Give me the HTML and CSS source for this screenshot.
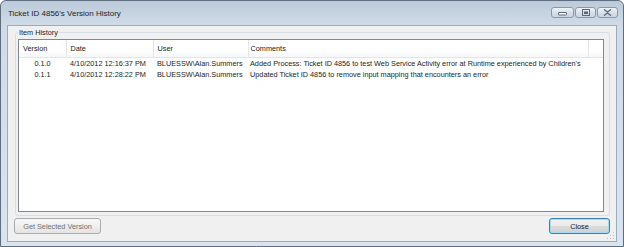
FILE: index.html
```
<!DOCTYPE html>
<html lang="en">
<head>
  <meta charset="UTF-8" />
  <title>Ticket ID 4856's Version History</title>
  <link rel="stylesheet" href="styles.css">
</head>
<body>
<div class="window">
  <div class="titlebar">
    <span class="title">Ticket ID 4856's Version History</span>
    <div class="caption-buttons">
      <span class="cap cap-min">
        <svg width="9" height="5" viewBox="0 0 9 5"><rect x="0.5" y="1.5" width="8" height="2.5" rx="0.5" fill="#fff" stroke="#5b6878"/></svg>
      </span>
      <span class="cap cap-max">
        <svg width="8" height="7" viewBox="0 0 8 7"><rect x="0.5" y="0.5" width="7" height="6" fill="none" stroke="#5b6878"/><rect x="2" y="2.5" width="4" height="2.5" fill="#5b6878"/></svg>
      </span>
      <span class="cap cap-close">
        <svg width="9" height="7" viewBox="0 0 9 7"><path d="M1 0.5 L4.5 3 L8 0.5 M1 6.5 L4.5 4 L8 6.5" fill="none" stroke="#5b6878" stroke-width="1.4"/></svg>
      </span>
    </div>
  </div>

  <div class="client">
    <fieldset class="group">
      <legend>Item History</legend>
      <div class="listview">
        <table class="grid">
          <colgroup>
            <col class="c-version"><col class="c-date"><col class="c-user"><col class="c-comments"><col>
          </colgroup>
          <thead>
            <tr>
              <th>Version</th>
              <th>Date</th>
              <th>User</th>
              <th>Comments</th>
              <th class="filler"></th>
            </tr>
          </thead>
          <tbody>
            <tr>
              <td class="ver">0.1.0</td>
              <td>4/10/2012 12:16:37 PM</td>
              <td>BLUESSW\Alan.Summers</td>
              <td>Added Process: Ticket ID 4856 to test Web Service Activity error at Runtime experienced by Children's</td>
              <td></td>
            </tr>
            <tr>
              <td class="ver">0.1.1</td>
              <td>4/10/2012 12:28:22 PM</td>
              <td>BLUESSW\Alan.Summers</td>
              <td>Updated Ticket ID 4856 to remove input mapping that encounters an error</td>
              <td></td>
            </tr>
          </tbody>
        </table>
      </div>
    </fieldset>

    <div class="button-row">
      <button class="btn" type="button" disabled>Get Selected Version</button>
      <button class="btn btn-default" type="button">Close</button>
    </div>

    <span class="grip"></span>
  </div>
</div>
</body>
</html>
```

FILE: styles.css
```
*{box-sizing:border-box;margin:0;padding:0}
html,body{height:100%}
body{background:#fff;font-family:"Liberation Sans",Arial,sans-serif;font-size:7.3px;color:#1e1e1e;overflow:hidden}

.window {
  width: 624px;
  height: 247px;
  border: 1px solid #5f6e7e;
  border-radius: 6px 6px 0 0;
  background: linear-gradient(#bccad9, #cfdbe7 24px, #d9e4f0);
  padding: 0 6px 4px 6px;
  display: flex;
  flex-direction: column;
}

.titlebar {
  height: 24px;
  display: flex;
  align-items: flex-start;
  justify-content: space-between;
}
.title{font-size:8px;color:#1f1f1f;padding:8px 0 0 1px;line-height:9px}

.caption-buttons{display:flex;gap:1px;padding-top:6px;margin-right:-1px}
.cap {
  width: 21px;
  height: 11px;
  border: 1px solid #8a99aa;
  border-radius: 3px;
  background: linear-gradient(#eef3f8, #d5dfea 55%, #c9d5e2);
  display: flex;
  align-items: center;
  justify-content: center;
}
.cap-min{width:23px}
.cap-min svg{margin-top:2px}

.client {
  flex: 1;
  position: relative;
  background: #f0f0f0;
  border: 1px solid #9dacbc;
  display: flex;
  flex-direction: column;
}

.group {
  margin: 2px 6px 0 7px;
  padding: 2px 5px 3px 2px;
  border: 1px solid #d5dfe5;
  border-radius: 3px;
  flex: 1;
  display: flex;
  flex-direction: column;
  min-height: 0;
}
.group legend{padding:0 1px;line-height:9px;font-size:7.3px;color:#1e1e1e}

.listview {
  flex: 1;
  background: #fff;
  border: 1px solid #828790;
  overflow: hidden;
}

.grid{width:100%;border-collapse:collapse;table-layout:fixed}
.c-version{width:47px}.c-date{width:87px}.c-user{width:95px}.c-comments{width:340px}
.grid th {
  height: 17px;
  text-align: left;
  font-weight: normal;
  color: #222;
  padding: 1px 0 0 4px;
  background: linear-gradient(#fff, #fff 60%, #f6f7f9);
  border-right: 1px solid #e3e5e8;
  border-bottom: 1px solid #e3e5e8;
  white-space: nowrap;
}
.grid th.filler{border-right:none}
.grid td {
  height: 11px;
  line-height: 11px;
  padding: 0 0 0 4px;
  white-space: nowrap;
  overflow: hidden;
}
.grid td:nth-child(4),.grid th:nth-child(4){padding-left:2px}
.grid td.ver{text-align:center;padding-left:0}

.button-row {
  display: flex;
  justify-content: space-between;
  padding: 2px 6px 7px 6px;
}
.btn {
  height: 16px;
  font-family: inherit;
  font-size: 7.3px;
  border: 1px solid #a9adb0;
  border-radius: 3px;
  background: linear-gradient(#f7f7f7, #efefef 50%, #e3e3e3);
  color: #1e1e1e;
}
.btn:disabled{color:#6f6f6f;width:87px}
.btn-default {
  width: 61px;
  border-color: #3c7fb1;
  box-shadow: inset 0 0 0 1px #a6dbf6;
  background: linear-gradient(#f2f2f2, #ebebeb 50%, #dddddd 51%, #cfcfcf);
}

.grip {
  position: absolute;
  right: 2px;
  bottom: 2px;
  width: 8px;
  height: 8px;
  background:
    radial-gradient(circle, #b9c1c9 0.8px, transparent 1px) 0 0/3px 3px;
  clip-path: polygon(100% 0, 100% 100%, 0 100%);
}
```
